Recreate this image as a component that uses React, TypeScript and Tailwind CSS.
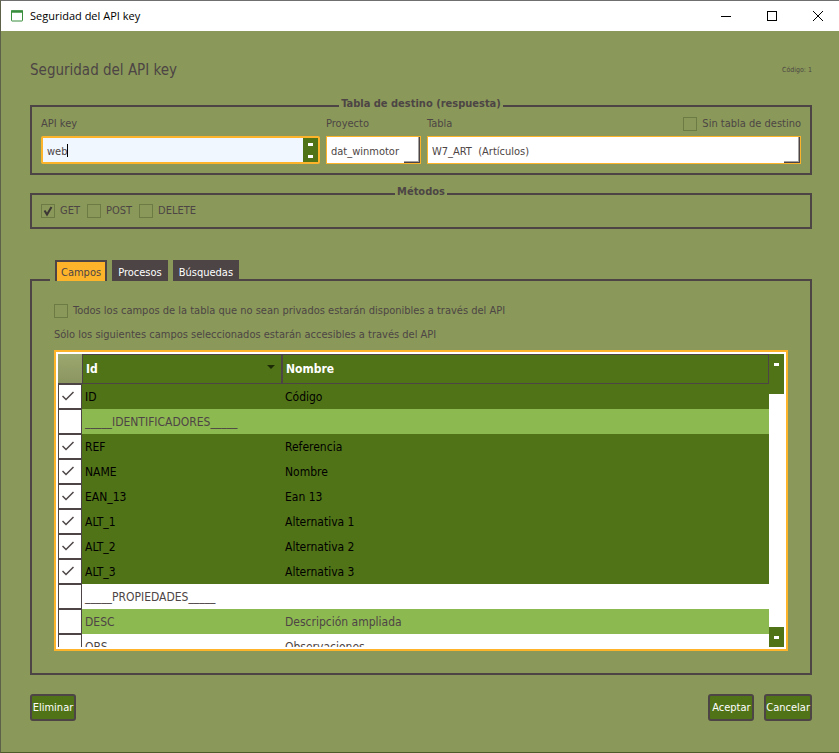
import { useState } from "react";
import type { ReactNode } from "react";

type Field = { id: string; name: string; checked: boolean; tone: string };

const DARK = "bg-[#517317] text-black";
const LIGHT = "bg-[#8db951] text-[#4d4545]";
const PLAIN = "bg-white text-[#4d4545]";

const FIELDS: Field[] = [
  { id: "ID", name: "Código", checked: true, tone: DARK },
  { id: "_____IDENTIFICADORES_____", name: "", checked: false, tone: LIGHT },
  { id: "REF", name: "Referencia", checked: true, tone: DARK },
  { id: "NAME", name: "Nombre", checked: true, tone: DARK },
  { id: "EAN_13", name: "Ean 13", checked: true, tone: DARK },
  { id: "ALT_1", name: "Alternativa 1", checked: true, tone: DARK },
  { id: "ALT_2", name: "Alternativa 2", checked: true, tone: DARK },
  { id: "ALT_3", name: "Alternativa 3", checked: true, tone: DARK },
  { id: "_____PROPIEDADES_____", name: "", checked: false, tone: PLAIN },
  { id: "DESC", name: "Descripción ampliada", checked: false, tone: LIGHT },
  { id: "OBS", name: "Observaciones", checked: false, tone: PLAIN },
];

function Check({ label, defaultChecked = false }: { label: string; defaultChecked?: boolean }) {
  return (
    <label className="flex items-center gap-[5px]">
      <span className="relative flex">
        <input
          type="checkbox"
          defaultChecked={defaultChecked}
          className="peer size-[14px] appearance-none border border-[#6c7a43]"
        />
        <svg
          viewBox="0 0 14 14"
          className="pointer-events-none absolute inset-0 hidden size-[14px] peer-checked:block"
          fill="none"
          stroke="#3c3636"
          strokeWidth="2"
        >
          <path d="M3.5 6.5 L6 10.5 L10.5 3" />
        </svg>
      </span>
      {label}
    </label>
  );
}

function Group({ title, children }: { title: string; children: ReactNode }) {
  return (
    <fieldset className="min-w-0 border-2 border-[#4d4545] px-[9px]">
      <legend className="mx-auto px-[2px] pb-1 text-[11px] leading-[14px] font-bold">{title}</legend>
      {children}
    </fieldset>
  );
}

function Combo({ id, value }: { id: string; value: string }) {
  return (
    <div className="relative flex h-7 border border-[#feb42a] bg-white">
      <select id={id} className="w-full appearance-none bg-transparent pt-[3px] pl-1 whitespace-pre">
        <option>{value}</option>
      </select>
      <span className="pointer-events-none absolute inset-y-0 right-0 flex w-4 border-r border-b border-[#4d4545]">
        <span className="flex-1 border-r border-b border-[#a3a0a0]" />
      </span>
    </div>
  );
}

function Tab({ label, active, onClick }: { label: string; active: boolean; onClick: () => void }) {
  return (
    <button
      type="button"
      role="tab"
      aria-selected={active}
      onClick={onClick}
      className={
        active
          ? "border-2 border-b-0 border-[#4d4545] bg-[#feb42a] px-1 pt-[2px]"
          : "border-2 border-b-0 border-[#4d4545] bg-[#4d4545] px-1 pt-[2px] text-white"
      }
    >
      {label}
    </button>
  );
}

function PushButton({ children }: { children: ReactNode }) {
  return (
    <button
      type="button"
      className="h-[27px] min-w-[46px] rounded-[3px] border-2 border-[#4d4545] bg-[#517317] text-white"
    >
      {children}
    </button>
  );
}

const Mark = () => <span className="h-[3px] w-[5px] bg-white" />;

export default function App() {
  const [tab, setTab] = useState("Campos");
  return (
    <div className="flex h-screen min-h-[560px] flex-col overflow-hidden border-t border-b border-l border-t-[#6f6f6f] border-b-[#4b5a28] border-l-[#5c6148] bg-[#8a9959] font-['DejaVu_Sans_Condensed','DejaVu_Sans',sans-serif] text-[11px] leading-4 text-[#4d4545]">
      <header className="-mr-[2px] flex h-[30px] items-center bg-white pl-[10px] text-black">
        <svg viewBox="0 0 12 12" className="size-3" fill="none" stroke="#388e3c">
          <rect x="0.5" y="1" width="11" height="10" rx="0.5" />
          <path d="M0 1.5 H12" strokeWidth="2.5" />
        </svg>
        <h1 className="flex-1 pl-[7px] font-['Open_Sans','Noto_Sans',sans-serif] text-[11px]">
          Seguridad del API key
        </h1>
        <button type="button" aria-label="Minimizar" className="flex w-[46px] justify-center">
          <svg viewBox="0 0 10 10" className="size-[10px]" stroke="#000">
            <path d="M0 5.5 H10" />
          </svg>
        </button>
        <button type="button" aria-label="Maximizar" className="flex w-[46px] justify-center">
          <svg viewBox="0 0 10 10" className="size-[10px]" fill="none" stroke="#000">
            <rect x="0.5" y="0.5" width="9" height="9" />
          </svg>
        </button>
        <button type="button" aria-label="Cerrar" className="flex w-[46px] justify-center">
          <svg viewBox="0 0 10 10" className="size-[10px]" stroke="#000">
            <path d="M0 0 L10 10 M10 0 L0 10" />
          </svg>
        </button>
      </header>

      <main className="flex min-h-0 flex-1 flex-col pt-[29px] pr-[27px] pb-[31px] pl-[29px]">
        <div className="mb-[17px] flex items-center justify-between">
          <h2 className="text-[15px] leading-5">Seguridad del API key</h2>
          <span className="text-[7px]">Código: 1</span>
        </div>

        <Group title="Tabla de destino (respuesta)">
          <div className="grid grid-cols-[279px_95px_1fr] gap-x-[6px] gap-y-1 pt-px pb-[9px]">
            <label htmlFor="api-key">API key</label>
            <label htmlFor="project">Proyecto</label>
            <div className="flex items-center justify-between">
              <label htmlFor="table">Tabla</label>
              <Check label="Sin tabla de destino" />
            </div>
            <div className="flex h-7 items-center rounded-[2px] border-2 border-[#feb42a] bg-[#f0f7ff] pl-1">
              <input
                id="api-key"
                defaultValue="web"
                className="[field-sizing:content] min-w-0 bg-transparent pt-[3px] outline-none"
              />
              <span className="h-[13px] w-px bg-black" />
              <span className="flex-1" />
              <span className="flex w-[15px] flex-col self-stretch bg-[#517317]">
                <button type="button" aria-label="Subir" className="flex flex-1 items-center justify-center">
                  <Mark />
                </button>
                <button type="button" aria-label="Bajar" className="flex flex-1 items-center justify-center">
                  <Mark />
                </button>
              </span>
            </div>
            <Combo id="project" value="dat_winmotor" />
            <Combo id="table" value={"W7_ART\u00a0 (Artículos)"} />
          </div>
        </Group>

        <div className="mt-[10px]">
          <Group title="Métodos">
            <div className="flex gap-[7px] pb-2">
              <Check label="GET" defaultChecked />
              <Check label="POST" />
              <Check label="DELETE" />
            </div>
          </Group>
        </div>

        <div role="tablist" className="z-10 mt-[31px] ml-5 flex h-[21px] gap-[5px] self-start bg-[#8a9959] pl-[5px]">
          {["Campos", "Procesos", "Búsquedas"].map((name) => (
            <Tab key={name} label={name} active={tab === name} onClick={() => setTab(name)} />
          ))}
        </div>
        <section className="-mt-[2px] flex min-h-0 flex-1 flex-col border-2 border-[#4d4545] px-[22px] pt-[22px] pb-[22px]">
          <Check label="Todos los campos de la tabla que no sean privados estarán disponibles a través del API" />
          <p className="mt-2 mb-[7px]">
            Sólo los siguientes campos seleccionados estarán accesibles a través del API
          </p>
          <div className="flex min-h-0 flex-1 border-2 border-[#feb42a] bg-white p-[2px]">
            <div className="min-h-0 flex-1 overflow-hidden">
              <table className="w-full table-fixed border-separate border-spacing-0 text-left text-[12px]">
                <colgroup>
                  <col className="w-6" />
                  <col className="w-[200px]" />
                  <col />
                </colgroup>
                <thead>
                  <tr className="h-[30px] bg-[#517317] text-white">
                    <th aria-label="Seleccionado" className="border-b border-[#4d4545] bg-linear-to-b from-[#9ba86f] to-[#8b9560] p-0" />
                    <th className="border border-[#4d4545] py-0 pr-[6px] pl-[3px]">
                      <span className="flex items-center justify-between">
                        Id
                        <svg viewBox="0 0 8 8" className="size-2" fill="#1c2a06">
                          <path d="M0 0 H8 L4 4 Z" />
                        </svg>
                      </span>
                    </th>
                    <th className="border border-[#4d4545] py-0 pl-[3px]">Nombre</th>
                  </tr>
                </thead>
                <tbody>
                  {FIELDS.map((f) => (
                    <tr key={f.id} className={`h-[25px] ${f.tone}`}>
                      <td className="border border-[#4d4545] bg-white p-0">
                        <label className="relative flex h-[23px]">
                          <input
                            type="checkbox"
                            aria-label={f.id}
                            defaultChecked={f.checked}
                            className="peer size-full appearance-none"
                          />
                          <svg
                            viewBox="0 0 12 10"
                            className="pointer-events-none absolute top-[6px] left-[3px] hidden h-[10px] w-3 peer-checked:block"
                            fill="none"
                            stroke="#4d4545"
                            strokeWidth="1.5"
                          >
                            <path d="M0.5 5 L4 8.5 L11.5 1" />
                          </svg>
                        </label>
                      </td>
                      <td className="py-0 pl-[3px]">{f.id}</td>
                      <td className="py-0 pl-[3px]">{f.name}</td>
                    </tr>
                  ))}
                </tbody>
              </table>
            </div>
            <div className="flex w-[15px] flex-col justify-between">
              <button type="button" aria-label="Desplazar arriba" className="flex h-10 justify-center bg-[#517317] pt-[9px]">
                <Mark />
              </button>
              <button type="button" aria-label="Desplazar abajo" className="flex h-5 items-center justify-center bg-[#517317]">
                <Mark />
              </button>
            </div>
          </div>
        </section>

        <footer className="mt-[19px] flex gap-[10px]">
          <PushButton>Eliminar</PushButton>
          <span className="flex-1" />
          <PushButton>Aceptar</PushButton>
          <PushButton>Cancelar</PushButton>
        </footer>
      </main>
    </div>
  );
}
